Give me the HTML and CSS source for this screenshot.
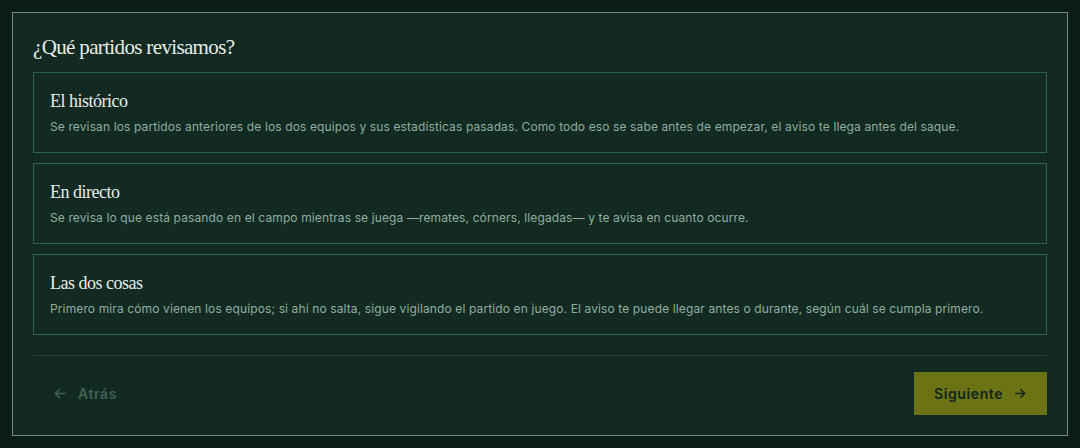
FILE: index.html
```html
<!DOCTYPE html>
<html lang="es">
<head>
<meta charset="utf-8">
<link rel="stylesheet" href="styles.css">
</head>
<body>
<main class="card">
  <h1 class="title">¿Qué partidos revisamos?</h1>
  <div class="options">
    <div class="option">
      <h2 class="option-title">El histórico</h2>
      <p class="option-text">Se revisan los partidos anteriores de los dos equipos y sus estadísticas pasadas. Como todo eso se sabe antes de empezar, el aviso te llega antes del saque.</p>
    </div>
    <div class="option">
      <h2 class="option-title">En directo</h2>
      <p class="option-text">Se revisa lo que está pasando en el campo mientras se juega —remates, córners, llegadas— y te avisa en cuanto ocurre.</p>
    </div>
    <div class="option">
      <h2 class="option-title">Las dos cosas</h2>
      <p class="option-text">Primero mira cómo vienen los equipos; si ahí no salta, sigue vigilando el partido en juego. El aviso te puede llegar antes o durante, según cuál se cumpla primero.</p>
    </div>
  </div>
  <div class="footer">
    <button class="btn btn-back" type="button">
      <svg class="icon" viewBox="0 0 16 16" width="15" height="15"><path d="M13.5 8H2.5M7.5 3L2.5 8l5 5" fill="none" stroke="currentColor" stroke-width="1.6"/></svg>
      <span>Atrás</span>
    </button>
    <button class="btn btn-next" type="button">
      <span>Siguiente</span>
      <svg class="icon" viewBox="0 0 16 16" width="15" height="15"><path d="M2.5 8h11M8.5 3l5 5-5 5" fill="none" stroke="currentColor" stroke-width="1.6"/></svg>
    </button>
  </div>
</main>
</body>
</html>
```

FILE: styles.css
```css
* { box-sizing: border-box; }
html, body { margin: 0; padding: 0; }
body {
  background: #0c1c17;
  padding: 12px;
  height: 448px;
  font-family: "Inter", "Liberation Sans", sans-serif;
}
.card {
  height: 424px;
  background: #122a22;
  border: 1px solid #6f8f82;
  padding: 20px 20px 20px 20px;
  display: flex;
  flex-direction: column;
}
.title {
  margin: 0;
  font-family: "Liberation Serif", serif;
  font-weight: 400;
  font-size: 21px;
  line-height: 28px;
  color: #e6ede9;
  letter-spacing: -0.65px;
}
.options {
  margin-top: 11px;
  display: flex;
  flex-direction: column;
  gap: 10px;
}
.option {
  border: 1px solid #2c634d;
  height: 81px;
  padding: 16px 16px 0 16px;
}
.option-title {
  margin: 0;
  font-family: "Liberation Serif", serif;
  font-weight: 400;
  font-size: 18px;
  line-height: 24px;
  color: #e6ede9;
  letter-spacing: -0.5px;
}
.option-text {
  margin: 6px 0 0 0;
  font-size: 12px;
  line-height: 16px;
  color: #8fae9f;
  letter-spacing: 0.12px;
}
.footer {
  margin-top: 20px;
  border-top: 1px solid #213f34;
  padding-top: 16px;
  display: flex;
  justify-content: space-between;
  align-items: center;
}
.btn {
  border: none;
  font-family: "Inter", "Liberation Sans", sans-serif;
  font-size: 14px;
  font-weight: 600;
  letter-spacing: 0.6px;
  height: 43px;
  display: flex;
  align-items: center;
  gap: 10px;
  cursor: pointer;
}
.btn-back {
  background: transparent;
  color: #3d6252;
  padding: 0 20px;
}
.btn-next {
  background: #6b7315;
  color: #10261e;
  padding: 0 20px;
  width: 133px;
  justify-content: center;
}
.icon { display: block; }
```
